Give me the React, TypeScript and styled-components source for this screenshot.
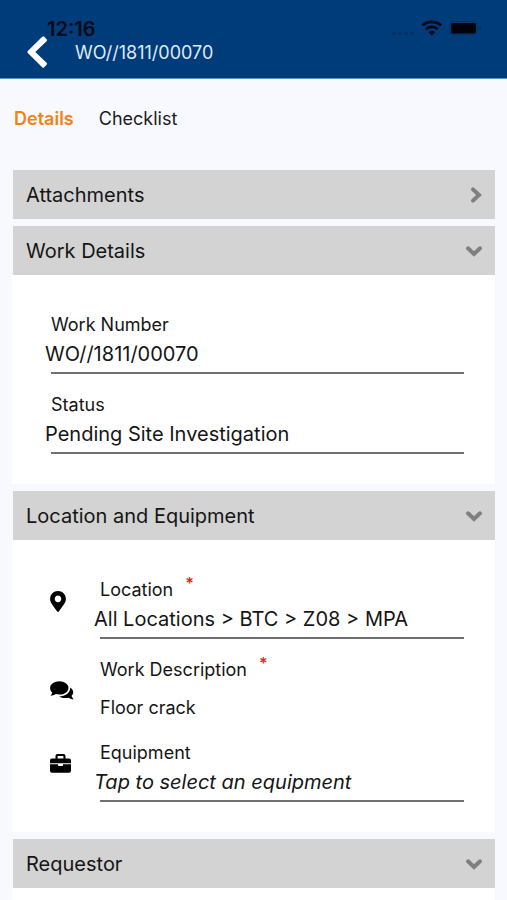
import React, { useState } from "react";
import styled, { createGlobalStyle } from "styled-components";

const GlobalStyle = createGlobalStyle`
  *, *::before, *::after { box-sizing: border-box; }
  body {
    margin: 0;
    background: #f8f9ff;
    color: #151515;
    font-family: Inter, "Liberation Sans", sans-serif;
  }
  button, input { font: inherit; color: inherit; }
`;

const Screen = styled.div`
  height: 100vh;
  overflow: hidden;
`;

const TopBar = styled.header`
  position: relative;
  display: flex;
  align-items: flex-end;
  height: 79px;
  padding: 0 24px 8px;
  background: #003b7a;
  border-bottom: 1px solid #5a93c6;
`;

const StatusBar = styled.div`
  position: absolute;
  top: 16px;
  left: 47px;
  right: 26px;
  display: flex;
  justify-content: space-between;
  color: #040a14;
`;

const Clock = styled.span`
  font-size: 20px;
  line-height: 26px;
  font-weight: 600;
`;

const BackButton = styled.button`
  display: flex;
  padding: 0;
  border: 0;
  background: none;
  color: #fff;
  cursor: pointer;
`;

const Title = styled.h1`
  margin: 0 0 5px 23px;
  font-size: 18px;
  line-height: 24px;
  font-weight: 400;
  color: #dfeaf8;
`;

const Tabs = styled.nav`
  display: flex;
  gap: 25px;
  padding: 28px 14px 39px;
`;

const Tab = styled.button<{ $active: boolean }>`
  padding: 0;
  border: 0;
  background: none;
  font-size: 18px;
  line-height: 24px;
  font-weight: ${(p) => (p.$active ? 600 : 400)};
  color: ${(p) => (p.$active ? "#f08414" : "#1c1c1e")};
  cursor: pointer;
`;

const Sections = styled.main`
  display: flex;
  flex-direction: column;
  gap: 7px;
  padding: 0 12px;
`;

const SectionHeading = styled.h2`
  margin: 0 0 0 1px;
  font-size: 20px;
  font-weight: 400;
`;

const SectionToggle = styled.button`
  display: flex;
  align-items: center;
  justify-content: space-between;
  width: 100%;
  height: 49px;
  padding: 0 12px 0 13px;
  border: 0;
  background: #d3d3d3;
  text-align: left;
  cursor: pointer;
`;

const SectionBody = styled.div<{ $inset: number }>`
  display: flex;
  flex-direction: column;
  gap: 19px;
  padding: 38px 31px 30px ${(p) => p.$inset}px;
  background: #fff;
`;

const IconRow = styled.div<{ $centered?: boolean }>`
  display: grid;
  grid-template-columns: 44px 1fr;
  align-items: ${(p) => (p.$centered ? "center" : "start")};
`;

const IconCell = styled.span<{ $centered?: boolean }>`
  display: flex;
  padding-top: ${(p) => (p.$centered ? 0 : 13)}px;
  color: #000;
`;

const FieldBox = styled.div`
  display: flex;
  flex-direction: column;
`;

const Label = styled.label`
  display: flex;
  gap: 12px;
  margin-left: 6px;
  font-size: 18px;
  line-height: 24px;
`;

const Required = styled.span`
  height: 10px;
  font-size: 16px;
  line-height: 10px;
  font-weight: 600;
  color: #ff1820;
`;

const Value = styled.input`
  width: 100%;
  height: 35px;
  padding: 0 0 2px;
  border: 0;
  outline: 0;
  background: none;
  font-size: 20px;

  &::placeholder {
    color: #151515;
    font-style: italic;
    opacity: 1;
  }
`;

const Underline = styled.div`
  height: 2px;
  margin-left: 6px;
  background: #707070;
`;

const PlainValue = styled.output`
  margin: 12px 0 0 6px;
  font-size: 18px;
  line-height: 28px;
`;

function Chevron({ open }: { open: boolean }) {
  return (
    <svg width="18" height="18" viewBox="0 0 18 18" fill="none" stroke="#7f7f7f" strokeWidth="4" strokeLinecap="round" strokeLinejoin="miter" aria-hidden="true">
      <path d={open ? "M3 6.3 9 12l6-5.7" : "M8 3.4 14 9l-6 5.6"} />
    </svg>
  );
}

function PinIcon() {
  return (
    <svg width="16" height="21" viewBox="0 0 384 512" fill="currentColor" aria-hidden="true">
      <path d="M172.268 501.67C26.97 291.031 0 269.413 0 192 0 85.961 85.961 0 192 0s192 85.961 192 192c0 77.413-26.97 99.031-172.268 309.67-9.535 13.774-29.93 13.773-39.464 0zM192 272c44.183 0 80-35.817 80-80s-35.817-80-80-80-80 35.817-80 80 35.817 80 80 80z" />
    </svg>
  );
}

function CommentsIcon() {
  return (
    <svg width="24" height="19" viewBox="0 0 24 19" fill="currentColor" aria-hidden="true">
      <path d="M9.3.2c5.1 0 9.2 3 9.2 6.7s-4.1 6.7-9.2 6.7c-1.3 0-2.5-.2-3.6-.5-1.5 1-3.2 1.6-5.2 1.6.9-1 1.500-2 1.700-3.200C.9 10.300.1 8.700.1 6.900.1 3.200 4.200.2 9.300.2Z" />
      <path d="M20.200 6.800c1.900 1 3 2.600 3 4.400 0 1.400-.6 2.600-1.600 3.500.3 1.300 1 2.400 2.200 3.500-2 .1-3.700-.5-5.100-1.500-3.600.8-7 .3-9.500-1.300C15.200 15.300 20.300 11.800 20.200 6.800Z" />
    </svg>
  );
}

function BriefcaseIcon() {
  return (
    <svg width="21" height="19" viewBox="0 0 21 19" fill="currentColor" aria-hidden="true">
      <path d="M5.500 4.400V2q0-1.900 1.900-1.900h6.200q1.900 0 1.900 1.900v2.400H19q2 0 2 2v2.900H0V6.400q0-2 2-2ZM7.600 2.100v2.300h5.800V2.100Z" fillRule="evenodd" />
      <path d="M0 10.300h8v.9q0 .8.800.8h3.400q.8 0 .8-.8v-.9h8v6.400q0 2-2 2H2q-2 0-2-2Z" />
    </svg>
  );
}

function Section({
  title,
  initiallyOpen = true,
  inset = 33,
  children,
}: {
  title: string;
  initiallyOpen?: boolean;
  inset?: number;
  children?: React.ReactNode;
}) {
  const [open, setOpen] = useState(initiallyOpen);
  return (
    <section>
      <SectionHeading>
        <SectionToggle type="button" aria-expanded={open} onClick={() => setOpen(!open)}>
          {title}
          <Chevron open={open} />
        </SectionToggle>
      </SectionHeading>
      {open && <SectionBody $inset={inset}>{children}</SectionBody>}
    </section>
  );
}

function Field({
  id,
  label,
  value,
  placeholder,
  required,
}: {
  id: string;
  label: string;
  value?: string;
  placeholder?: string;
  required?: boolean;
}) {
  return (
    <FieldBox>
      <Label htmlFor={id}>
        {label}
        {required && <Required>*</Required>}
      </Label>
      <Value id={id} type="text" readOnly value={value ?? ""} placeholder={placeholder} />
      <Underline />
    </FieldBox>
  );
}

export default function App() {
  const [tab, setTab] = useState("Details");
  return (
    <>
      <GlobalStyle />
      <Screen>
        <TopBar>
          <StatusBar>
            <Clock>12:16</Clock>
            <svg width="90" height="24" viewBox="0 0 90 24" aria-hidden="true">
              <g fill="#02326a">
                <rect x="1" y="16" width="4" height="3" rx="1" />
                <rect x="7" y="16" width="4" height="3" rx="1" />
                <rect x="13" y="16" width="4" height="3" rx="1" />
                <rect x="19" y="16" width="4" height="3" rx="1" />
              </g>
              <g fill="none" stroke="#020814" strokeWidth="2.8">
                <path d="M31.5 9.6a13.4 13.4 0 0 1 18.6 0" />
                <path d="M34.8 13.2a8.7 8.7 0 0 1 12 0" />
              </g>
              <path d="M37.6 16.2a4.8 4.8 0 0 1 6.4 0L40.8 19.4Z" fill="#020814" />
              <rect x="58.5" y="5.5" width="28" height="13" rx="4" fill="none" stroke="#02306a" />
              <rect x="60" y="7" width="25" height="10.5" rx="2" fill="#00040a" />
              <path d="M88.3 10v4.5a2.4 2.4 0 0 0 0-4.5Z" fill="#022c5e" />
            </svg>
          </StatusBar>
          <BackButton type="button" aria-label="Back">
            <svg width="28" height="36" viewBox="0 0 28 36" fill="currentColor" aria-hidden="true">
              <path d="M3.8 17 18.2 2.8q1-1 2 0l2.4 2.4q1 1 0 2L11.3 18l11.3 10.8q1 1 0 2l-2.4 2.4q-1 1-2 0L3.8 19q-1-1 0-2Z" />
            </svg>
          </BackButton>
          <Title>WO//1811/00070</Title>
        </TopBar>
        <Tabs>
          {["Details", "Checklist"].map((name) => (
            <Tab key={name} type="button" $active={tab === name} onClick={() => setTab(name)}>
              {name}
            </Tab>
          ))}
        </Tabs>
        <Sections>
          <Section title="Attachments" initiallyOpen={false} />
          <Section title="Work Details">
            <Field id="work-number" label="Work Number" value="WO//1811/00070" />
            <Field id="status" label="Status" value="Pending Site Investigation" />
          </Section>
          <Section title="Location and Equipment" inset={38}>
            <IconRow>
              <IconCell>
                <PinIcon />
              </IconCell>
              <Field id="location" label="Location" value="All Locations > BTC > Z08 > MPA" required />
            </IconRow>
            <IconRow $centered>
              <IconCell $centered>
                <CommentsIcon />
              </IconCell>
              <FieldBox>
                <Label htmlFor="description">
                  Work Description
                  <Required>*</Required>
                </Label>
                <PlainValue id="description">Floor crack</PlainValue>
              </FieldBox>
            </IconRow>
            <IconRow>
              <IconCell>
                <BriefcaseIcon />
              </IconCell>
              <Field id="equipment" label="Equipment" placeholder="Tap to select an equipment" />
            </IconRow>
          </Section>
          <Section title="Requestor" />
        </Sections>
      </Screen>
    </>
  );
}
